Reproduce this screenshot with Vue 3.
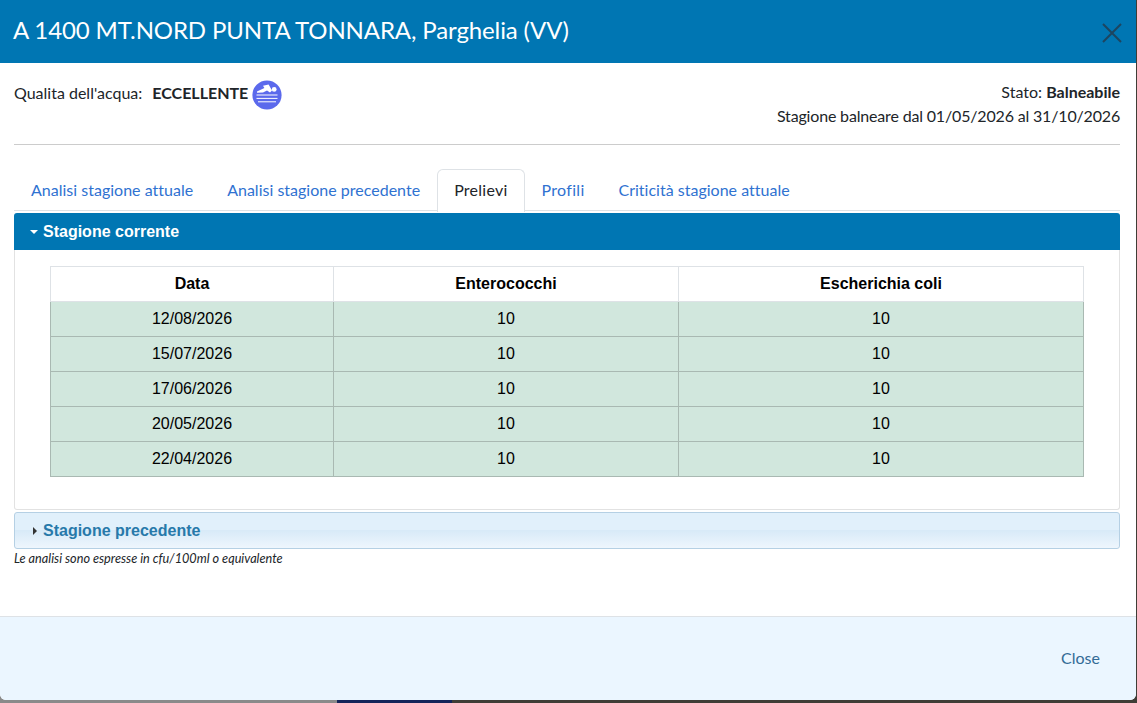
<script setup>
const columns = ['Data', 'Enterococchi', 'Escherichia coli']
const rows = [
  { data: '12/08/2026', entero: 10, coli: 10 },
  { data: '15/07/2026', entero: 10, coli: 10 },
  { data: '17/06/2026', entero: 10, coli: 10 },
  { data: '20/05/2026', entero: 10, coli: 10 },
  { data: '22/04/2026', entero: 10, coli: 10 }
]
const tabs = ['Analisi stagione attuale', 'Analisi stagione precedente', 'Prelievi', 'Profili', 'Criticità stagione attuale']
</script>

<template>
  <div class="page">
    <div class="modal">
      <header class="modal-header">
        <h1>A 1400 MT.NORD PUNTA TONNARA, Parghelia (VV)</h1>
        <svg class="close-x" width="20" height="20" viewBox="0 0 20 20">
          <path d="M1 1 L19 19 M19 1 L1 19" stroke="#1d4560" stroke-width="2" fill="none" />
        </svg>
      </header>

      <div class="modal-body">
        <div class="info-row">
          <div class="quality">
            <span class="quality-label">Qualita dell'acqua:</span>
            <b>ECCELLENTE</b>
            <svg class="swim" width="30" height="30" viewBox="0 0 30 30">
              <circle cx="15" cy="15" r="14.6" fill="#5b69ec" />
              <path d="M5 11.6 L12.4 8 L11 5.8 L16.6 4.4 L20 10.6 L18 12.4 L15 10.4 L11 12.6 L5 12.8 Z" fill="#fff" />
              <circle cx="22.2" cy="9.4" r="2.4" fill="#fff" />
              <path d="M4.5 15 H25.5 M4.5 18.4 H25.5 M6 21.8 H24" stroke="#fff" stroke-width="1" fill="none" />
            </svg>
          </div>
          <div class="state">
            <div>Stato: <b>Balneabile</b></div>
            <div class="season">Stagione balneare dal 01/05/2026 al 31/10/2026</div>
          </div>
        </div>
        <hr />

        <nav class="tabs">
          <a v-for="tab in tabs" :key="tab" class="tab" :class="{ active: tab === 'Prelievi' }">{{ tab }}</a>
        </nav>

        <div class="acc-head open">
          <span class="caret down"></span>Stagione corrente
        </div>
        <div class="acc-panel">
          <table>
            <thead>
              <tr>
                <th v-for="col in columns" :key="col">{{ col }}</th>
              </tr>
            </thead>
            <tbody>
              <tr v-for="row in rows" :key="row.data">
                <td>{{ row.data }}</td>
                <td>{{ row.entero }}</td>
                <td>{{ row.coli }}</td>
              </tr>
            </tbody>
          </table>
        </div>
        <div class="acc-head closed">
          <span class="caret right"></span>Stagione precedente
        </div>
        <p class="note">Le analisi sono espresse in cfu/100ml o equivalente</p>
      </div>

      <footer class="modal-footer">
        <a class="close-link">Close</a>
      </footer>
    </div>
  </div>
</template>

<style>
html, body {
  margin: 0;
  overflow: hidden;
}
</style>

<style scoped>
.page {
  width: 1137px;
  height: 703px;
  background: linear-gradient(90deg, #8a8a8a 0, #8a8a8a 337px, #14245a 337px, #14245a 452px, #3f3d36 452px, #3f3d36 100%);
  font-family: Lato, sans-serif;
  color: #212529;
}

.modal {
  width: 1136px;
  height: 700px;
  background: #fff;
  border-radius: 0 0 6px 6px;
  display: flex;
  flex-direction: column;
  overflow: hidden;
}

.modal-header {
  height: 63px;
  flex: none;
  box-sizing: border-box;
  background: #0076b3;
  display: flex;
  align-items: center;
  justify-content: space-between;
  padding: 0 14px 2px 13px;
}

.modal-header h1 {
  margin: 0;
  color: #fff;
  font-size: 24px;
  font-weight: 400;
  line-height: 1.2;
  letter-spacing: -0.12px;
}

.close-x {
  margin-top: 5px;
}

.modal-body {
  flex: 1;
  padding: 0 16px 0 14px;
}

.info-row {
  height: 81px;
  display: flex;
  justify-content: space-between;
  font-size: 16px;
}

.quality {
  display: flex;
  align-items: flex-start;
  padding-top: 17px;
}

.quality-label {
  margin-right: 10px;
  line-height: 25px;
}

.quality b {
  line-height: 25px;
  margin-right: 4px;
}

.state {
  text-align: right;
  padding-top: 17px;
  line-height: 24px;
}

.season {
  letter-spacing: -0.17px;
}

hr {
  margin: 0;
  border: 0;
  border-top: 1px solid #ccc;
}

.tabs {
  margin-top: 24px;
  display: flex;
  height: 41px;
  border-bottom: 1px solid #dee2e6;
}

.tab {
  padding: 0 16px;
  line-height: 39px;
  font-size: 16px;
  letter-spacing: 0.01px;
  color: #2f72d1;
  border: 1px solid transparent;
  border-bottom: 0;
  border-radius: 6px 6px 0 0;
}

.tab:nth-child(4) {
  letter-spacing: 0.3px;
}

.tab.active {
  color: #212529;
  background: #fff;
  border-color: #dee2e6;
  height: 41px;
  padding-bottom: 1px;
  letter-spacing: 0.25px;
}

.acc-head {
  height: 37px;
  margin-top: 2px;
  box-sizing: border-box;
  border-radius: 3px 3px 0 0;
  display: flex;
  align-items: center;
  font-family: "Liberation Sans", Arial, sans-serif;
  font-size: 16px;
  font-weight: 700;
  padding-left: 16px;
}

.acc-head.open {
  background: #0076b3;
  color: #fff;
}

.acc-head.closed {
  border: 1px solid #b5d0e4;
  border-radius: 3px;
  background: linear-gradient(#e1f0fb 0, #e1f0fb 50%, #d8eaf8 50%, #eef6fd 100%);
  color: #2779aa;
  padding-left: 15px;
}

.caret {
  width: 0;
  height: 0;
  display: inline-block;
}

.caret.down {
  border-left: 4px solid transparent;
  border-right: 4px solid transparent;
  border-top: 4px solid #fff;
  margin-right: 5px;
}

.caret.right {
  border-top: 4px solid transparent;
  border-bottom: 4px solid transparent;
  border-left: 4px solid #333;
  margin-left: 3px;
  margin-right: 6px;
}

.acc-panel {
  height: 260px;
  box-sizing: border-box;
  border: 1px solid #e2e2e2;
  border-top: 0;
  border-radius: 0 0 3px 3px;
  padding: 16px 35px 0;
}

table {
  width: 1034px;
  border-collapse: collapse;
  table-layout: fixed;
  font-family: "Liberation Sans", Arial, sans-serif;
  font-size: 16px;
  color: #000;
}

th {
  height: 34px;
  padding: 0;
  font-weight: 700;
  border: 1px solid #dee2e6;
  background: #fff;
}

th:nth-child(1), td:nth-child(1) { width: 282px; }
th:nth-child(2), td:nth-child(2) { width: 344px; }

td {
  height: 34px;
  padding: 0;
  text-align: center;
  background: #d1e7dd;
  border: 1px solid #a9b9b2;
}

.note {
  margin: 0;
  font-size: 12.7px;
  font-style: italic;
  line-height: 18px;
}

.modal-footer {
  height: 84px;
  flex: none;
  box-sizing: border-box;
  background: #ebf6ff;
  border-top: 1px solid #dee2e6;
  display: flex;
  align-items: center;
  justify-content: flex-end;
  padding: 0 36px 2px 0;
}

.close-link {
  font-size: 16px;
  color: #336b96;
}
</style>
